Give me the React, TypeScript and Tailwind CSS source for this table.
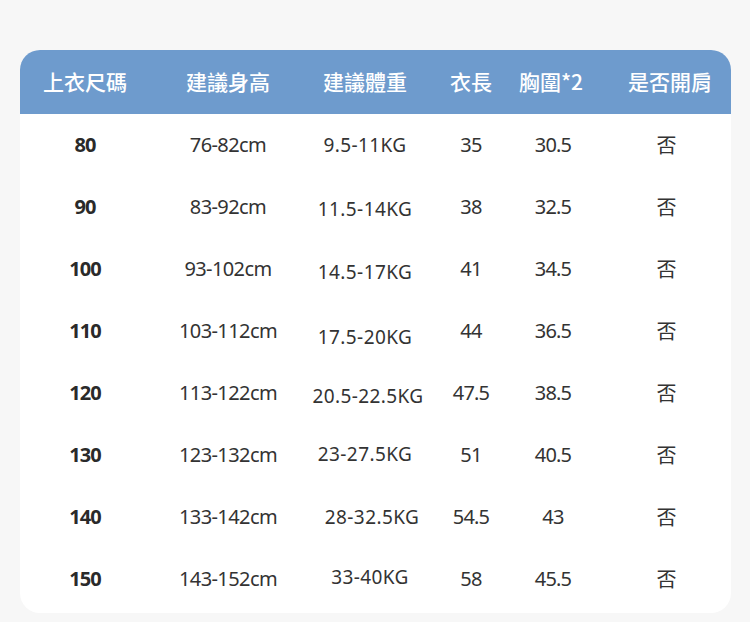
import React from "react";

const rows = [
  { s: "80", h: "76-82cm", w: "9.5-11KG", wy: "mt-[0px]", wx: "", l: "35", c: "30.5" },
  { s: "90", h: "83-92cm", w: "11.5-14KG", wy: "mt-[4px]", wx: "", l: "38", c: "32.5" },
  { s: "100", h: "93-102cm", w: "14.5-17KG", wy: "mt-[6px]", wx: "", l: "41", c: "34.5" },
  { s: "110", h: "103-112cm", w: "17.5-20KG", wy: "mt-[12px]", wx: "", l: "44", c: "36.5" },
  { s: "120", h: "113-122cm", w: "20.5-22.5KG", wy: "mt-[6px]", wx: "ml-[6px]", l: "47.5", c: "38.5" },
  { s: "130", h: "123-132cm", w: "23-27.5KG", wy: "-mt-[2px]", wx: "", l: "51", c: "40.5" },
  { s: "140", h: "133-142cm", w: "28-32.5KG", wy: "mt-[0px]", wx: "ml-[14px]", l: "54.5", c: "43" },
  { s: "150", h: "143-152cm", w: "33-40KG", wy: "-mt-[4px]", wx: "ml-[10px]", l: "58", c: "45.5" },
];

const headers = ["上衣尺碼", "建議身高", "建議體重", "衣長", "胸圍*2", "是否開肩"];

export default function App() {
  return (
    <div className="w-[750px] h-[622px] bg-[#f7f7f7] pt-[50px] pl-[20px] pr-[19px] overflow-hidden">
      <div className="bg-white rounded-[20px] overflow-hidden h-[563px]">
        <div
          className="grid grid-cols-[130px_156px_118px_94px_68px_1fr] h-[64px] items-center bg-[#6e9bcd] text-white text-[21px] font-medium"
          style={{ fontFamily: '"Noto Sans CJK TC", "Noto Sans", sans-serif' }}
        >
          {headers.map((h, i) => (
            <div key={h} className={`flex justify-center ${i === 5 ? "pl-[23px]" : ""} ${i === 4 ? "-ml-[2px]" : ""}`}>
              {h}
            </div>
          ))}
        </div>
        {rows.map((r) => (
          <div
            key={r.s}
            className="grid grid-cols-[130px_156px_118px_94px_68px_1fr] h-[62px] items-center text-[#333333] text-[20px]"
            style={{ fontFamily: '"Noto Sans", "Noto Sans CJK TC", sans-serif' }}
          >
            <div className="flex justify-center font-bold tracking-[-1px] text-[#2a2a2a]">{r.s}</div>
            <div className="flex justify-center tracking-[-0.6px]">{r.h}</div>
            <div className={`flex justify-center text-[19px] tracking-[0.4px] ${r.wy}`}>
              <span className={r.wx}>{r.w}</span>
            </div>
            <div className="flex justify-center tracking-[-0.8px]">{r.l}</div>
            <div className="flex justify-center tracking-[-0.8px] pl-[2px]">{r.c}</div>
            <div
              className="flex justify-center pl-[16px]"
              style={{ fontFamily: '"Noto Sans CJK TC", sans-serif' }}
            >
              否
            </div>
          </div>
        ))}
      </div>
    </div>
  );
}
